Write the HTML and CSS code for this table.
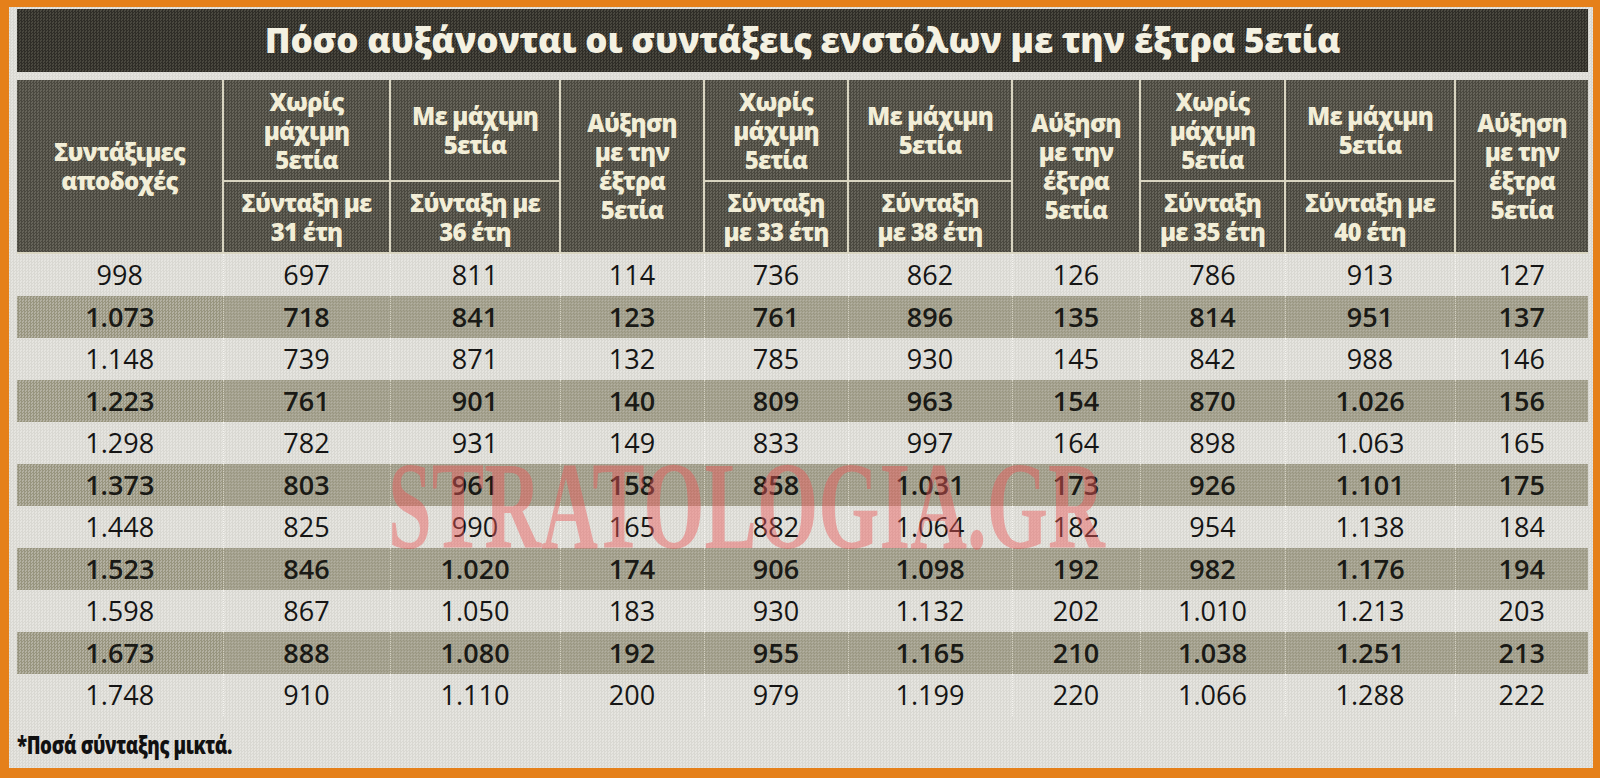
FILE: index.html
```html
<!DOCTYPE html>
<html lang="el">
<head>
<meta charset="utf-8">
<title>Πόσο αυξάνονται οι συντάξεις ενστόλων με την έξτρα 5ετία</title>
<link rel="stylesheet" href="styles.css">
</head>
<body>
<div class="paper">
  <h1 class="title">Πόσο αυξάνονται οι συντάξεις ενστόλων με την έξτρα 5ετία</h1>
  <table class="grid">
    <colgroup>
      <col class="c1"><col class="c2"><col class="c3"><col class="c4"><col class="c5">
      <col class="c6"><col class="c7"><col class="c8"><col class="c9"><col class="c10">
    </colgroup>
    <thead>
      <tr class="hrow-top">
        <th rowspan="2">Συντάξιμες<br>αποδοχές</th>
        <th>Χωρίς<br>μάχιμη<br>5ετία</th>
        <th>Με μάχιμη<br>5ετία</th>
        <th rowspan="2">Αύξηση<br>με την<br>έξτρα<br>5ετία</th>
        <th>Χωρίς<br>μάχιμη<br>5ετία</th>
        <th>Με μάχιμη<br>5ετία</th>
        <th rowspan="2">Αύξηση<br>με την<br>έξτρα<br>5ετία</th>
        <th>Χωρίς<br>μάχιμη<br>5ετία</th>
        <th>Με μάχιμη<br>5ετία</th>
        <th rowspan="2">Αύξηση<br>με την<br>έξτρα<br>5ετία</th>
      </tr>
      <tr class="hrow-bottom">
        <th>Σύνταξη με<br>31 έτη</th>
        <th>Σύνταξη με<br>36 έτη</th>
        <th>Σύνταξη<br>με 33 έτη</th>
        <th>Σύνταξη<br>με 38 έτη</th>
        <th>Σύνταξη<br>με 35 έτη</th>
        <th>Σύνταξη με<br>40 έτη</th>
      </tr>
    </thead>
    <tbody>
      <tr><td>998</td><td>697</td><td>811</td><td>114</td><td>736</td><td>862</td><td>126</td><td>786</td><td>913</td><td>127</td></tr>
      <tr><td>1.073</td><td>718</td><td>841</td><td>123</td><td>761</td><td>896</td><td>135</td><td>814</td><td>951</td><td>137</td></tr>
      <tr><td>1.148</td><td>739</td><td>871</td><td>132</td><td>785</td><td>930</td><td>145</td><td>842</td><td>988</td><td>146</td></tr>
      <tr><td>1.223</td><td>761</td><td>901</td><td>140</td><td>809</td><td>963</td><td>154</td><td>870</td><td>1.026</td><td>156</td></tr>
      <tr><td>1.298</td><td>782</td><td>931</td><td>149</td><td>833</td><td>997</td><td>164</td><td>898</td><td>1.063</td><td>165</td></tr>
      <tr><td>1.373</td><td>803</td><td>961</td><td>158</td><td>858</td><td>1.031</td><td>173</td><td>926</td><td>1.101</td><td>175</td></tr>
      <tr><td>1.448</td><td>825</td><td>990</td><td>165</td><td>882</td><td>1.064</td><td>182</td><td>954</td><td>1.138</td><td>184</td></tr>
      <tr><td>1.523</td><td>846</td><td>1.020</td><td>174</td><td>906</td><td>1.098</td><td>192</td><td>982</td><td>1.176</td><td>194</td></tr>
      <tr><td>1.598</td><td>867</td><td>1.050</td><td>183</td><td>930</td><td>1.132</td><td>202</td><td>1.010</td><td>1.213</td><td>203</td></tr>
      <tr><td>1.673</td><td>888</td><td>1.080</td><td>192</td><td>955</td><td>1.165</td><td>210</td><td>1.038</td><td>1.251</td><td>213</td></tr>
      <tr><td>1.748</td><td>910</td><td>1.110</td><td>200</td><td>979</td><td>1.199</td><td>220</td><td>1.066</td><td>1.288</td><td>222</td></tr>
    </tbody>
  </table>
  <p class="note"><span class="note-text">*Ποσά σύνταξης μικτά.</span></p>
  <div class="watermark">STRATOLOGIA.GR</div>
</div>
</body>
</html>
```

FILE: styles.css
```css
html, body {
  margin: 0;
  padding: 0;
}

body {
  width: 1600px;
  height: 778px;
  background: #e5801a;
  overflow: hidden;
  font-family: "Open Sans", "Noto Sans", sans-serif;
}

.paper {
  position: relative;
  box-sizing: border-box;
  margin: 7px 7px 0 9px;
  width: 1584px;
  height: 761px;
  padding: 2px 5px 0 8px;
  background-color: #e0dfda;
  background-image: repeating-conic-gradient(#d9d8d2 0 25%, #e6e5e0 0 50%);
  background-size: 3px 3px;
}

.title {
  margin: 0 0 8px 0;
  height: 63px;
  line-height: 62px;
  background-color: #3c3a33;
  background-image: repeating-conic-gradient(#2f2d27 0 25%, #4a483f 0 50%);
  background-size: 3px 3px;
  color: #f4f1e2;
  font-family: "Open Sans", "Noto Sans", sans-serif;
  font-weight: 800;
  font-size: 35px;
  letter-spacing: -0.2px;
  text-align: center;
}

.grid {
  width: 1571px;
  table-layout: fixed;
  border-collapse: collapse;
  border-style: hidden;
}

.c1 { width: 206px; }
.c2 { width: 167px; }
.c3 { width: 170px; }
.c4 { width: 144px; }
.c5 { width: 144px; }
.c6 { width: 164px; }
.c7 { width: 128px; }
.c8 { width: 145px; }
.c9 { width: 170px; }
.c10 { width: 133px; }

.grid th {
  background-color: #57554b;
  background-image: repeating-conic-gradient(#4a483f 0 25%, #66645a 0 50%);
  background-size: 3px 3px;
  color: #f2eed7;
  font-weight: 800;
  font-size: 24px;
  line-height: 29px;
  letter-spacing: -0.8px;
  text-align: center;
  vertical-align: middle;
  padding: 0;
  border: 2px solid #d9d5c1;
}

.hrow-top th {
  height: 100px;
}

.hrow-bottom th {
  height: 70px;
}

.grid td {
  height: 42px;
  padding: 0;
  text-align: center;
  vertical-align: middle;
  font-size: 27px;
  line-height: 42px;
  color: #151515;
  background: transparent;
  border-left: 1px dotted #f4f3ef;
  border-right: 1px dotted #f4f3ef;
}

.grid tbody tr:nth-child(even) td {
  background-color: #a6a392;
  background-image: repeating-conic-gradient(#98957f 0 25%, #b4b1a2 0 50%);
  background-size: 3px 3px;
  font-weight: 600;
  color: #1a1a16;
  border-left-color: #d3d0c0;
  border-right-color: #d3d0c0;
}

.note {
  margin: 15px 0 0 0;
  height: 28px;
}

.note-text {
  display: inline-block;
  font-weight: 800;
  font-size: 24px;
  line-height: 28px;
  color: #111;
  letter-spacing: -0.5px;
  transform: scaleX(0.78);
  transform-origin: left center;
}

.watermark {
  position: absolute;
  left: 379px;
  top: 438px;
  font-family: "Liberation Serif", "DejaVu Serif", serif;
  font-weight: 700;
  font-size: 124px;
  line-height: 1;
  white-space: nowrap;
  color: rgba(236, 88, 88, 0.45);
  transform: scaleX(0.635);
  transform-origin: left top;
  pointer-events: none;
}
```
